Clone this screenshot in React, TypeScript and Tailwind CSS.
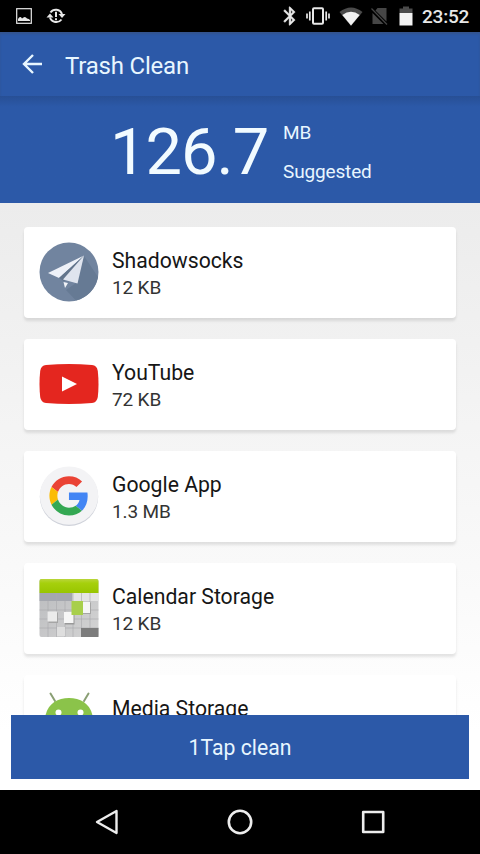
const apps = [
  { name: 'Shadowsocks', size: '12 KB', icon: <ShadowsocksIcon /> },
  { name: 'YouTube', size: '72 KB', icon: <YouTubeIcon /> },
  { name: 'Google App', size: '1.3 MB', icon: <GoogleIcon /> },
  { name: 'Calendar Storage', size: '12 KB', icon: <CalendarIcon /> },
  { name: 'Media Storage', size: '', icon: <AndroidIcon /> },
]

function ShadowsocksIcon() {
  return (
    <svg className="w-[60px] h-[60px]" viewBox="0 0 60 60">
      <circle cx="30" cy="30" r="29.5" fill="#71849f" />
      <path d="M45 14L37 41L27 48L37 58.5A29.5 29.5 0 0 0 59 35Z" fill="#667a94" />
      <path d="M45 13.5L9 31L20 36Z" fill="#eef1f8" />
      <path d="M45 13.5L20 36L25 39Z" fill="#63758c" />
      <path d="M45 13.5L24 37.5L38.5 41.5Z" fill="#dfe4ee" />
      <path d="M24.5 40L29 41L26 46Z" fill="#f1f3f8" />
    </svg>
  )
}

function YouTubeIcon() {
  return (
    <svg className="w-[60px] h-[60px]" viewBox="0 0 60 60">
      <path d="M7 11Q30 9 53 11Q58 11.5 58.8 17Q60.2 30 58.8 43Q58 48.5 53 49Q30 51 7 49Q2 48.5 1.2 43Q-0.2 30 1.2 17Q2 11.5 7 11Z" fill="#e4261f" />
      <path d="M23 22.5L38 30L23 37.5Z" fill="#fff" />
    </svg>
  )
}

function GoogleIcon() {
  return (
    <svg className="w-[60px] h-[60px]" viewBox="0 0 60 60">
      <circle cx="30" cy="30.8" r="29.2" fill="#cfd2da" />
      <circle cx="30" cy="29.6" r="29.2" fill="#f3f3f5" />
      <g transform="translate(10.4 10.3) scale(0.815)">
        <path fill="#EA4335" d="M24 9.5c3.54 0 6.71 1.22 9.21 3.6l6.85-6.85C35.9 2.38 30.47 0 24 0 14.62 0 6.51 5.38 2.56 13.22l7.98 6.19C12.43 13.72 17.74 9.5 24 9.5z" />
        <path fill="#4285F4" d="M46.98 24.55c0-1.57-.15-3.09-.38-4.55H24v9.02h12.94c-.58 2.96-2.26 5.48-4.78 7.18l7.73 6c4.51-4.18 7.09-10.36 7.09-17.65z" />
        <path fill="#FBBC05" d="M10.53 28.59c-.48-1.45-.76-2.99-.76-4.59s.27-3.14.76-4.59l-7.98-6.19C.92 16.46 0 20.12 0 24c0 3.88.92 7.54 2.56 10.78l7.97-6.19z" />
        <path fill="#34A853" d="M24 48c6.48 0 11.93-2.13 15.89-5.81l-7.73-6c-2.15 1.45-4.92 2.3-8.16 2.3-6.26 0-11.57-4.22-13.47-9.91l-7.98 6.19C6.51 42.62 14.62 48 24 48z" />
      </g>
    </svg>
  )
}

function CalendarIcon() {
  return (
    <svg className="w-[60px] h-[60px]" viewBox="0 0 60 60">
      <defs>
        <linearGradient id="cal-top" x1="0" y1="0" x2="0" y2="1">
          <stop offset="0" stopColor="#b9d63a" />
          <stop offset="0.3" stopColor="#a6d00c" />
          <stop offset="1" stopColor="#98c500" />
        </linearGradient>
        <linearGradient id="cal-body" x1="0" y1="0" x2="1" y2="1">
          <stop offset="0" stopColor="#b9babd" />
          <stop offset="1" stopColor="#d4d4d4" />
        </linearGradient>
      </defs>
      <rect x="0.5" y="1" width="59" height="58" rx="2" fill="url(#cal-body)" />
      <path d="M0.5 15V3a2 2 0 0 1 2-2h55a2 2 0 0 1 2 2v12z" fill="url(#cal-top)" />
      <rect x="0.5" y="15" width="33" height="8" fill="#a4a7af" />
      <rect x="33.5" y="15" width="26" height="8" fill="#e4e4e4" />
      <path d="M9 15v44M17.5 15v44M26 15v44M34 15v44M42.5 15v44M51 15v44M0.5 32h59M0.5 41h59M0.5 50h59" stroke="#a9aaad" strokeWidth="0.6" />
      <rect x="42" y="50" width="17.5" height="9" fill="#7c7c7c" />
      <rect x="9.5" y="34.5" width="9.5" height="10.5" fill="#a5a5a5" />
      <rect x="8.5" y="33.5" width="9.5" height="10" fill="#ebebeb" />
      <rect x="26" y="34.5" width="9.500" height="12" fill="#999" />
      <rect x="25" y="34" width="9.5" height="11" fill="#f6f6f6" />
      <rect x="43.500" y="24.500" width="8.5" height="11.5" fill="#a5a5a5" />
      <rect x="43" y="24" width="8" height="11" fill="#f6f6f6" />
      <rect x="18" y="49" width="8" height="9" fill="#dedede" />
      <rect x="32.5" y="23" width="11.5" height="14" fill="#a8cf4c" />
    </svg>
  )
}

function AndroidIcon() {
  return (
    <svg className="w-[60px] h-[60px]" viewBox="0 0 60 60">
      <path d="M11.5 3.5L16 11M49.5 3.5L45 11" stroke="#8a9f74" strokeWidth="2" strokeLinecap="round" />
      <path d="M6 28C8 14 18 8 30 8S52 14 54 28Z" fill="#8bc34a" />
      <circle cx="19.5" cy="22.5" r="3" fill="#fff" />
      <circle cx="41.5" cy="22.5" r="3" fill="#fff" />
    </svg>
  )
}

function StatusBar() {
  return (
    <div className="h-8 shrink-0 bg-black flex items-center text-[#e8e8e8]">
      <svg className="w-4 h-4 ml-4" viewBox="0 0 16 16" fill="none">
        <rect x="0.7" y="0.7" width="14.6" height="14.6" stroke="currentColor" strokeWidth="1.2" />
        <path d="M2 13V11Q4 7.500 6 10.500Q9 7.500 11 10.500Q13 10.500 14 12V13Z" fill="currentColor" />
      </svg>
      <svg className="w-5 h-[18px] ml-[14px]" viewBox="0 0 20 18" fill="none">
        <path d="M4.5 5.5A6.6 6.6 0 0 1 16 7M15.5 12.5A6.6 6.6 0 0 1 4 10.500" stroke="currentColor" strokeWidth="2" />
        <path d="M12.5 7H19.5L16 11ZM0.500 10.5H7.5L4 6.500Z" fill="currentColor" />
        <path d="M10 4.8V10M10 11.2V13.2" stroke="currentColor" strokeWidth="2" />
      </svg>

      <div className="ml-auto flex items-center">
        <svg className="w-[22px] h-[22px] mr-[5px]" viewBox="0 0 24 24" fill="currentColor" stroke="currentColor" strokeWidth="0.4">
          <path d="M17.71 7.71L12 2h-1v7.59L6.41 5 5 6.41 10.59 12 5 17.59 6.41 19 11 14.41V22h1l5.71-5.71-4.3-4.29 4.3-4.29zM13 5.83l1.88 1.88L13 9.59V5.83zm1.88 10.46L13 18.17v-3.76l1.88 1.88z" />
        </svg>
        <svg className="w-6 h-[18px] mr-[9px]" viewBox="0 0 24 18" fill="none" stroke="currentColor">
          <rect x="7" y="1.2" width="10" height="15.6" rx="1" strokeWidth="2" />
          <path d="M3.8 4.5V13.5M20.2 4.5V13.5M1 6.5V11.5M23 6.5V11.5" strokeWidth="1.7" />
        </svg>
        <svg className="w-6 h-[19px] mr-2" viewBox="0 0 24 19">
          <path d="M0.5 5Q12 -4 23.5 5L12 19Z" fill="#4b4b4b" />
          <path d="M3.3 8Q12 1.5 20.7 8L12 18.5Z" fill="#f2f2f2" />
        </svg>
        <svg className="w-[17px] h-[18px] mr-[11px]" viewBox="0 0 17 18">
          <path d="M6.5 1H15.5V14.5L4.5 3.5ZM1.500 6L12.5 17H1.5Z" fill="#464646" />
          <path d="M0.5 1.5L16 17.5" stroke="#464646" strokeWidth="1.2" />
        </svg>
        <svg className="w-[14px] h-5 mr-[9px]" viewBox="0 0 14 20">
          <path d="M0.5 2.5H4V0.5H10V2.5H13.5V7H0.5Z" fill="#4b4b4b" />
          <path d="M0.5 7H13.5V19.5H0.5Z" fill="#f2f2f2" />
        </svg>
        <span className="w-[48px] mr-[10px] pt-px text-[19px] tracking-[-0.2px] leading-8 font-medium whitespace-nowrap">23:52</span>
      </div>
    </div>
  )
}

function Header() {
  return (
    <header className="shrink-0 bg-[#2c59a8] text-[#e8f6ff]">
      <div className="h-16 flex items-center shadow-[inset_0_2px_2px_#34558f]">
        <svg className="w-5 h-5 ml-[22px]" viewBox="0 0 20 20" fill="none" stroke="currentColor" strokeWidth="2.4">
          <path d="M20 10H2M11 1L2 10L11 19" />
        </svg>
        <h1 className="ml-[23px] text-[24px] tracking-[-0.2px] leading-8 pt-[3px]">Trash Clean</h1>
      </div>
      <div className="h-[107px] flex bg-linear-to-b from-[#274f95] to-[#2c59a8] to-10%">
        <span className="w-[173px] ml-[110px] text-[65px] tracking-[-1px] leading-[113px] text-[#f2fbff]">126.7</span>
        <div className="pt-[25px] text-[19px] tracking-[-0.15px] leading-6">
          <p>MB</p>
          <p className="mt-[15px]">Suggested</p>
        </div>
      </div>
    </header>
  )
}

function NavBar() {
  return (
    <nav className="h-16 shrink-0 bg-black flex items-center justify-between px-[94px] text-[#ededed]">
      <svg className="w-[26px] h-[26px]" viewBox="0 0 26 26" fill="none" stroke="currentColor" strokeWidth="2.4" strokeLinejoin="round">
        <path d="M22.5 2L3 13L22.5 24Z" />
      </svg>
      <svg className="w-[26px] h-[26px]" viewBox="0 0 26 26" fill="none" stroke="currentColor" strokeWidth="2.6">
        <circle cx="13" cy="13" r="11.2" />
      </svg>
      <svg className="w-[26px] h-[26px]" viewBox="0 0 26 26" fill="none" stroke="currentColor" strokeWidth="2.6" strokeLinejoin="round">
        <rect x="3.200" y="3" width="20" height="20" />
      </svg>
    </nav>
  )
}

export default function App() {
  return (
    <div className="w-[480px] h-[854px] flex flex-col overflow-hidden font-[Roboto,sans-serif]">
      <StatusBar />
      <Header />

      <main className="flex-1 min-h-0 flex flex-col bg-linear-to-b from-[#ececec] to-white to-90%">
        <div className="h-[512px] overflow-hidden px-6 pt-6 space-y-[21px]">
          {apps.map((app) => (
            <div
              key={app.name}
              className="h-[91px] flex items-start pt-[15px] pl-[15px] gap-[13px] bg-white rounded-[4px] shadow-[0_3px_3px_rgba(0,0,0,0.1)]"
            >
              {app.icon}
              <div className="pt-[5px]">
                <p className="text-[21.2px] leading-7 text-[#161616]">{app.name}</p>
                <p className="text-[19px] tracking-[-0.15px] leading-[26px] text-[#333]">{app.size}</p>
              </div>
            </div>
          ))}
        </div>
        <button className="h-16 mx-[11px] pt-px bg-[#2c59a8] text-[21.2px] text-[#e8f6ff]">1Tap clean</button>
      </main>

      <NavBar />
    </div>
  )
}
